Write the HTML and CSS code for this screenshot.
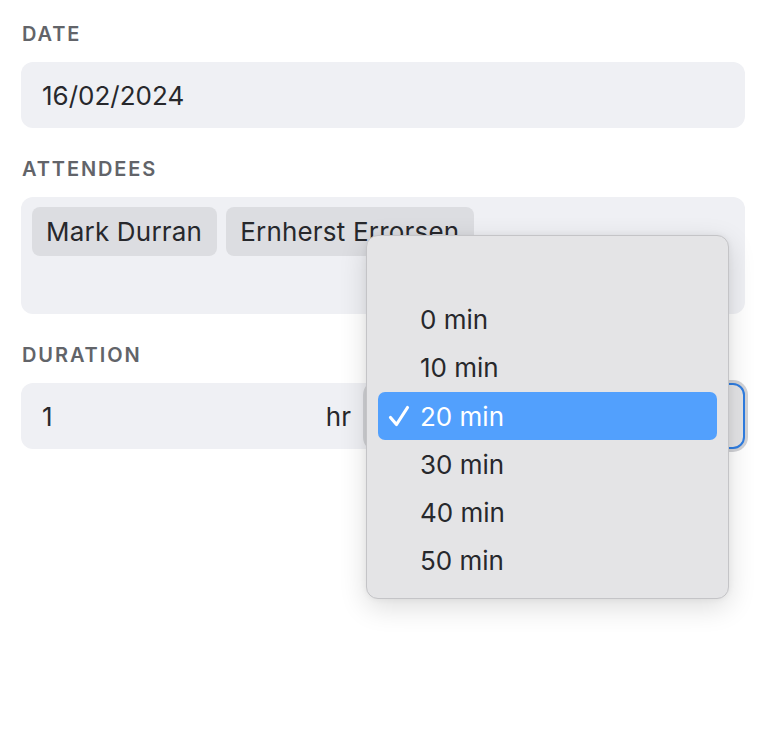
FILE: index.html
```html
<!DOCTYPE html>
<html>
<head>
<meta charset="utf-8">
<link rel="stylesheet" href="styles.css">
</head>
<body>
<div class="form">
  <div class="field">
    <div class="label">DATE</div>
    <div class="input">16/02/2024</div>
  </div>
  <div class="field">
    <div class="label">ATTENDEES</div>
    <div class="input tags">
      <span class="chip">Mark Durran</span>
      <span class="chip">Ernherst Errorsen</span>
    </div>
  </div>
  <div class="field">
    <div class="label">DURATION</div>
    <div class="duration">
      <div class="hours">
        <span>1</span>
        <span class="unit">hr</span>
      </div>
      <div class="select"></div>
    </div>
  </div>

  <div class="menu">
    <div class="item"></div>
    <div class="item">0 min</div>
    <div class="item">10 min</div>
    <div class="item selected">
      <svg class="check" viewBox="0 0 22 22" width="22" height="22"><path d="M2.5 12.5 L8.5 19.5 L19.5 2.5" fill="none" stroke="#fff" stroke-width="3.2" stroke-linecap="round" stroke-linejoin="round"/></svg>
      <span>20 min</span>
    </div>
    <div class="item">30 min</div>
    <div class="item">40 min</div>
    <div class="item">50 min</div>
  </div>
</div>
</body>
</html>
```

FILE: styles.css
```css
html, body {
  margin: 0;
  padding: 0;
  background: #ffffff;
}
body {
  min-height: 754px;
  font-family: "Inter", "Roboto", "Liberation Sans", sans-serif;
  color: #27282c;
}
.form {
  position: relative;
  width: 724px;
  padding: 22px 0 0 21px;
}
.field {
  margin-bottom: 29px;
}
.label {
  font-size: 20px;
  line-height: 24px;
  font-weight: 600;
  letter-spacing: 1.9px;
  color: #626469;
  padding-left: 1px;
  margin-bottom: 16px;
}
.input {
  box-sizing: border-box;
  height: 66px;
  background: #eff0f4;
  border-radius: 12px;
  padding: 0 21px;
  display: flex;
  align-items: center;
  font-size: 26px;
}
.tags {
  height: 117px;
  align-items: flex-start;
  padding: 10px 11px;
  gap: 9px;
}
.chip {
  display: inline-flex;
  align-items: center;
  height: 49px;
  padding: 0 15px 0 14px;
  background: #dcdde1;
  border-radius: 8px;
  font-size: 26px;
  letter-spacing: 0.2px;
}
.duration {
  display: flex;
  height: 66px;
  background: #eff0f4;
  border-radius: 12px;
}
.hours {
  box-sizing: border-box;
  width: 345px;
  display: flex;
  align-items: center;
  justify-content: space-between;
  padding: 0 15px 0 21px;
  font-size: 26px;
}
.select {
  flex: 1;
  box-sizing: border-box;
  border: 2px solid #2f7de1;
  border-radius: 12px;
  background: #e4e4e6;
  box-shadow: 0 0 0 3px #d2d3d7;
}
.menu {
  position: absolute;
  left: 366px;
  top: 235px;
  width: 363px;
  height: 364px;
  box-sizing: border-box;
  padding: 11px 0;
  background: #e4e4e6;
  border: 1px solid #c4c4c7;
  border-radius: 12px;
  box-shadow: 0 8px 28px rgba(0, 0, 0, 0.14), 0 0 6px rgba(0, 0, 0, 0.06);
}
.item {
  position: relative;
  height: 48.3px;
  margin: 0 11px;
  box-sizing: border-box;
  padding-left: 42px;
  display: flex;
  align-items: center;
  font-size: 26px;
  color: #27282c;
  border-radius: 7px;
}
.item.selected {
  background: #52a0fd;
  color: #ffffff;
}
.check {
  position: absolute;
  left: 10px;
  top: 13px;
}
```
